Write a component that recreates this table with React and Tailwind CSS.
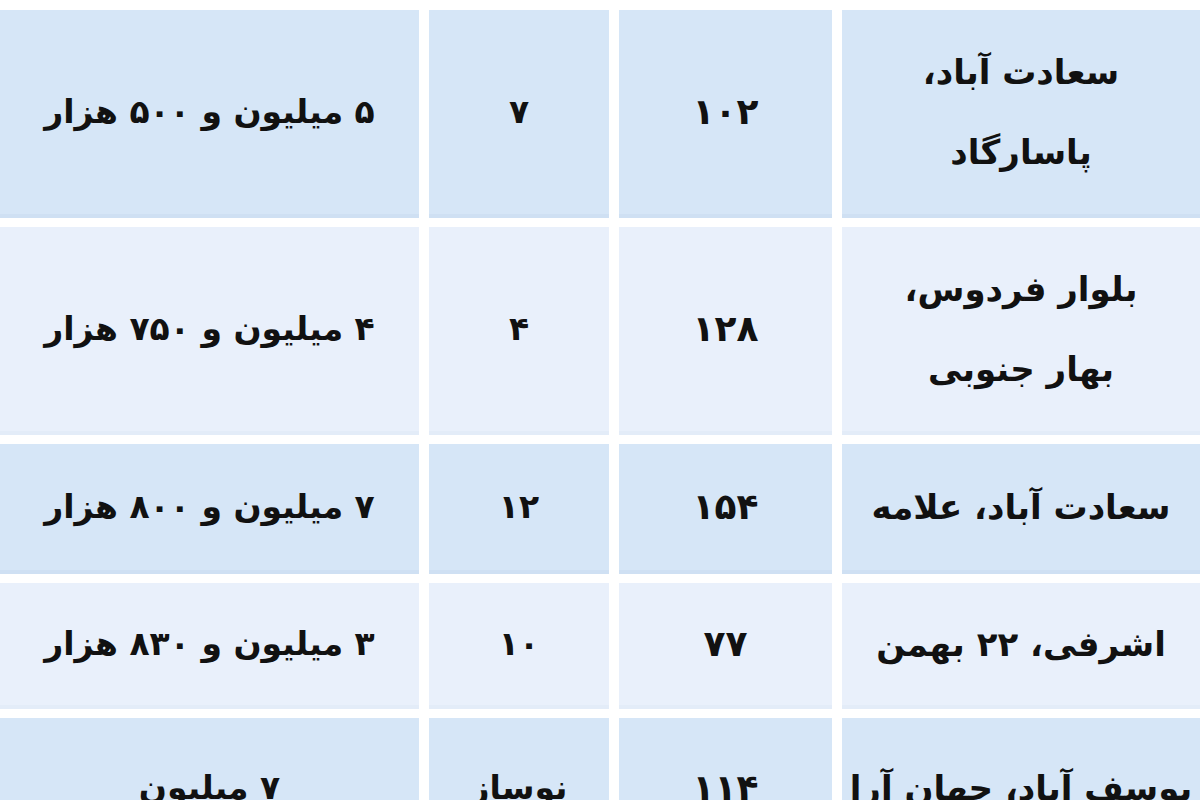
import React from 'react'

const rows = [
  { place: ['سعادت آباد،', 'پاسارگاد'], area: '۱۰۲', age: '۷', price: '۵ میلیون و ۵۰۰ هزار', h: 'h-[208px]', dark: true },
  { place: ['بلوار فردوس،', 'بهار جنوبی'], area: '۱۲۸', age: '۴', price: '۴ میلیون و ۷۵۰ هزار', h: 'h-[208px]', dark: false },
  { place: ['سعادت آباد، علامه'], area: '۱۵۴', age: '۱۲', price: '۷ میلیون و ۸۰۰ هزار', h: 'h-[130px]', dark: true },
  { place: ['اشرفی، ۲۲ بهمن'], area: '۷۷', age: '۱۰', price: '۳ میلیون و ۸۳۰ هزار', h: 'h-[126px]', dark: false },
  { place: ['یوسف آباد، جهان آرا'], area: '۱۱۴', age: 'نوساز', price: '۷ میلیون', h: 'h-[144px]', dark: true },
]

const Cell = ({ dark, h, children }) => (
  <div
    className={`${h} flex flex-col items-center justify-center text-center ${
      dark ? 'bg-[#d6e6f7] border-b-4 border-[#cfe0f3]' : 'bg-[#e9f0fb] border-b-4 border-[#e3ecf8]'
    }`}
  >
    {children}
  </div>
)

const App = () => {
  return (
    <div className="w-[1200px] h-[800px] overflow-hidden bg-white pt-[10px]">
      <div
        dir="rtl"
        className="grid grid-cols-[358px_213px_180px_419px] gap-x-[10px] gap-y-[9px] text-[#111] text-[33px] font-bold font-['DejaVu_Sans',sans-serif]"
      >
        {rows.map((r, i) => (
          <React.Fragment key={i}>
            <Cell dark={r.dark} h={r.h}>
              {r.place.map((line, j) => (
                <div key={j} className="leading-[80px] text-[34px]">{line}</div>
              ))}
            </Cell>
            <Cell dark={r.dark} h={r.h}>
              <div className="text-[36px]">{r.area}</div>
            </Cell>
            <Cell dark={r.dark} h={r.h}>
              <div>{r.age}</div>
            </Cell>
            <Cell dark={r.dark} h={r.h}>
              <div>{r.price}</div>
            </Cell>
          </React.Fragment>
        ))}
      </div>
    </div>
  )
}

export default App
